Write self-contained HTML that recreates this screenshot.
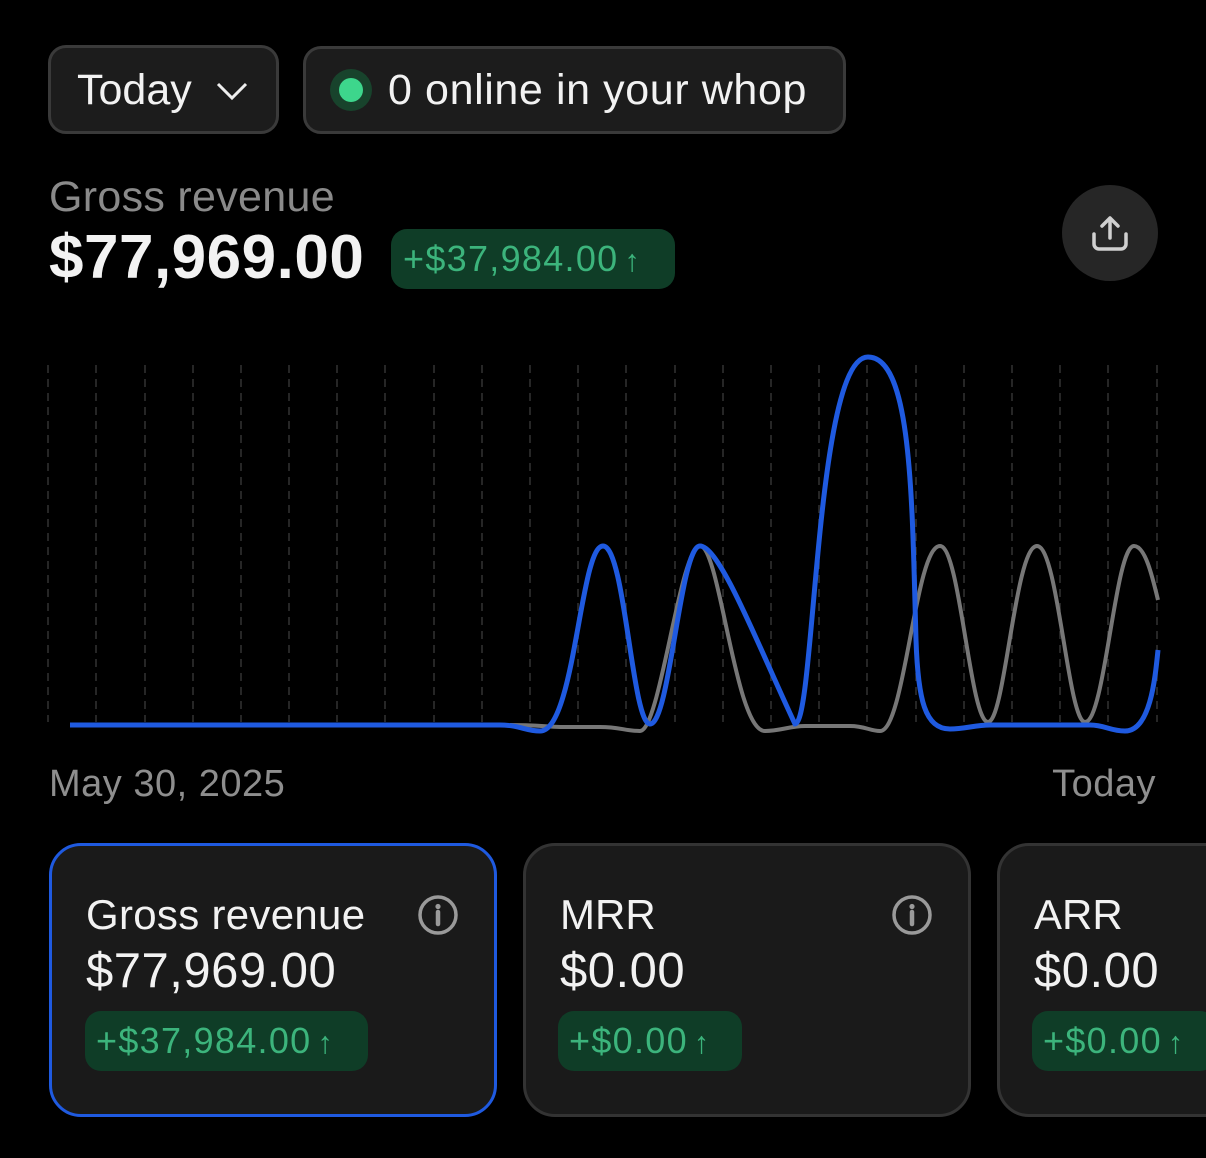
<!DOCTYPE html>
<html><head><meta charset="utf-8"><style>
body{margin:0;background:#000;width:1206px;height:1158px;overflow:hidden;position:relative;font-family:"Liberation Sans",sans-serif;color:#f2f2f2}
.a{position:absolute;white-space:nowrap}
.btn{position:absolute;background:#1c1c1c;border:3px solid #3a3a3a;border-radius:18px;box-sizing:border-box}
.badge{position:absolute;background:#0f3d27;border-radius:16px;color:#3cb47c;box-sizing:border-box;letter-spacing:1.3px}
.badge span{font-size:0.85em;margin-left:6px;letter-spacing:0}
.card{position:absolute;top:843px;width:448px;height:274px;background:#1a1a1a;border:3px solid #333;border-radius:32px;box-sizing:border-box}
</style></head><body>
<div class="btn" style="left:48px;top:45px;width:231px;height:89px"></div>
<div class="a" style="left:77px;top:64px;font-size:43px;line-height:52px">Today</div>
<svg class="a" style="left:215px;top:80px" width="34" height="22"><path d="M3 4 L17 18 L31 4" fill="none" stroke="#eee" stroke-width="3"/></svg>
<div class="btn" style="left:303px;top:46px;width:543px;height:88px"></div>
<div class="a" style="left:330px;top:69px;width:42px;height:42px;border-radius:50%;background:#18432c"></div>
<div class="a" style="left:339px;top:78px;width:24px;height:24px;border-radius:50%;background:#3dd68c"></div>
<div class="a" style="left:388px;top:64px;font-size:43px;line-height:52px;letter-spacing:0.6px">0 online in your whop</div>

<div class="a" style="left:49px;top:172px;font-size:43px;line-height:50px;color:#8a8a8a;letter-spacing:0.3px">Gross revenue</div>
<div class="a" style="left:49px;top:223px;font-size:62px;line-height:70px;font-weight:bold;letter-spacing:0.5px">$77,969.00</div>
<div class="badge" style="left:391px;top:229px;width:284px;height:60px;font-size:36px;line-height:60px;padding-left:12px">+$37,984.00<span>↑</span></div>
<div class="a" style="left:1062px;top:185px;width:96px;height:96px;border-radius:50%;background:#262626"></div>
<svg class="a" style="left:1090px;top:213px" width="40" height="40"><path d="M20 5 V25 M12 13 L20 5 L28 13 M4 21 V31 a5 5 0 0 0 5 5 H31 a5 5 0 0 0 5 -5 V21" fill="none" stroke="#d0d0d0" stroke-width="3.5" stroke-linecap="round" stroke-linejoin="round"/></svg>

<svg class="a" style="left:0;top:0" width="1206" height="760">
<g stroke="#333" stroke-width="1.5" stroke-dasharray="8 6">
<line x1="48" y1="365" x2="48" y2="722"/><line x1="96" y1="365" x2="96" y2="722"/><line x1="145" y1="365" x2="145" y2="722"/><line x1="193" y1="365" x2="193" y2="722"/><line x1="241" y1="365" x2="241" y2="722"/><line x1="289" y1="365" x2="289" y2="722"/><line x1="337" y1="365" x2="337" y2="722"/><line x1="385" y1="365" x2="385" y2="722"/><line x1="434" y1="365" x2="434" y2="722"/><line x1="482" y1="365" x2="482" y2="722"/><line x1="530" y1="365" x2="530" y2="722"/><line x1="578" y1="365" x2="578" y2="722"/><line x1="626" y1="365" x2="626" y2="722"/><line x1="675" y1="365" x2="675" y2="722"/><line x1="723" y1="365" x2="723" y2="722"/><line x1="771" y1="365" x2="771" y2="722"/><line x1="819" y1="365" x2="819" y2="722"/><line x1="867" y1="365" x2="867" y2="722"/><line x1="916" y1="365" x2="916" y2="722"/><line x1="964" y1="365" x2="964" y2="722"/><line x1="1012" y1="365" x2="1012" y2="722"/><line x1="1060" y1="365" x2="1060" y2="722"/><line x1="1108" y1="365" x2="1108" y2="722"/><line x1="1157" y1="365" x2="1157" y2="722"/>
</g>
<path d="M510 725 C530 725 540 726 560 727 L600 727 C620 727 625 731 640 731 C660 731 680 546 700 546 C720 546 735 731 765 731 C780 731 790 726 805 726 L850 726 C865 726 870 731 880 731 C905 731 915 546 940 546 C960 546 970 722 988 722 C1005 722 1015 546 1037 546 C1058 546 1068 722 1085 722 C1105 722 1115 546 1134 546 C1145 546 1152 575 1158 600" fill="none" stroke="#777" stroke-width="4"/>
<path d="M70 725 L500 725 C520 725 525 731 540 731 C575 731 580 546 603 546 C625 546 632 724 650 724 C670 724 680 546 700 546 C720 546 760 650 795 724 C815 724 815 357 868 357 C912 357 912 500 916 640 C918 700 925 729 950 729 C965 729 975 725 990 725 L1090 725 C1105 725 1110 731 1125 731 C1150 731 1155 680 1158 650" fill="none" stroke="#1f5ae0" stroke-width="5"/>
</svg>
<div class="a" style="left:49px;top:762px;font-size:38px;line-height:44px;color:#8e8e8e;letter-spacing:0.5px">May 30, 2025</div>
<div class="a" style="right:50px;top:762px;font-size:38px;line-height:44px;color:#8e8e8e;letter-spacing:0.5px">Today</div>

<div class="card" style="left:49px;border-color:#1f5ae0"></div>
<div class="card" style="left:523px"></div>
<div class="card" style="left:997px"></div>

<div class="a" style="left:86px;top:891px;font-size:42px;line-height:48px;letter-spacing:0.3px">Gross revenue</div>
<div class="a" style="left:86px;top:943px;font-size:49px;line-height:56px;letter-spacing:0.5px">$77,969.00</div>
<div class="badge" style="left:85px;top:1011px;width:283px;height:60px;font-size:36px;line-height:60px;padding-left:11px">+$37,984.00<span>↑</span></div>
<svg class="a" style="left:416px;top:893px" width="44" height="44"><circle cx="22" cy="22" r="18" fill="none" stroke="#9a9a9a" stroke-width="3.5"/><circle cx="22" cy="13.5" r="2.6" fill="#9a9a9a"/><path d="M22 19 V31" stroke="#9a9a9a" stroke-width="4.5" stroke-linecap="round"/></svg>

<div class="a" style="left:560px;top:891px;font-size:42px;line-height:48px">MRR</div>
<div class="a" style="left:560px;top:943px;font-size:49px;line-height:56px;letter-spacing:0.5px">$0.00</div>
<div class="badge" style="left:558px;top:1011px;width:184px;height:60px;font-size:36px;line-height:60px;padding-left:11px">+$0.00<span>↑</span></div>
<svg class="a" style="left:890px;top:893px" width="44" height="44"><circle cx="22" cy="22" r="18" fill="none" stroke="#9a9a9a" stroke-width="3.5"/><circle cx="22" cy="13.5" r="2.6" fill="#9a9a9a"/><path d="M22 19 V31" stroke="#9a9a9a" stroke-width="4.5" stroke-linecap="round"/></svg>

<div class="a" style="left:1034px;top:891px;font-size:42px;line-height:48px">ARR</div>
<div class="a" style="left:1034px;top:943px;font-size:49px;line-height:56px;letter-spacing:0.5px">$0.00</div>
<div class="badge" style="left:1032px;top:1011px;width:184px;height:60px;font-size:36px;line-height:60px;padding-left:11px">+$0.00<span>↑</span></div>
</body></html>
